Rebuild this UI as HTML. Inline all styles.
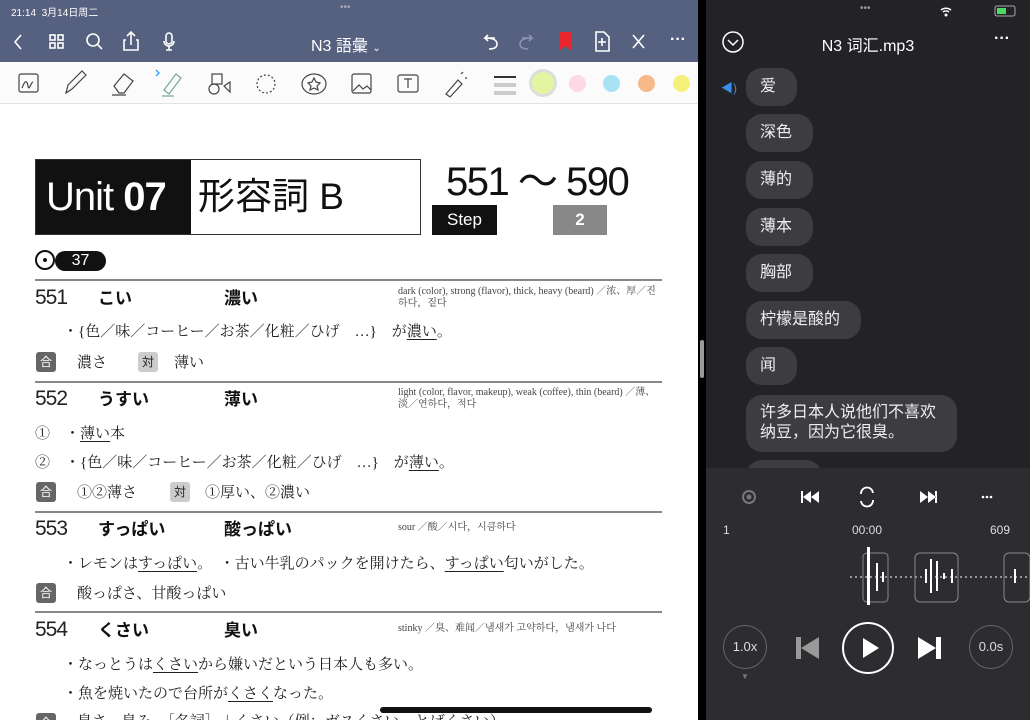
<!DOCTYPE html><html><head><meta charset="utf-8"><style>
*{margin:0;padding:0;box-sizing:border-box}
body{width:1030px;height:720px;overflow:hidden;background:#000;font-family:"Liberation Sans","Noto Sans CJK JP",sans-serif;position:relative}
.a{position:absolute}
#L{left:0;top:0;width:698px;height:720px;background:#fff;overflow:hidden}
#hdr{left:0;top:0;width:698px;height:62px;background:#56607f;color:#fff}
#tb{left:0;top:62px;width:698px;height:42px;background:#fbfbfb;border-bottom:1px solid #e2e2e2}
.jp{font-family:"Liberation Serif","Noto Serif CJK SC","Noto Sans CJK JP",serif;color:#222}
.hr{left:35px;width:627px;height:2px;background:#888}
.num{font-family:"Liberation Sans",sans-serif;font-size:21px;color:#222;letter-spacing:-1px}
.kw{font-family:"Noto Sans CJK JP",sans-serif;font-weight:bold;font-size:17px;color:#111}
.tr{font-family:"Liberation Serif","Noto Serif CJK SC",serif;font-size:10px;color:#444;line-height:12px}
.s{font-size:15px}
.bx{width:20px;height:20px;border-radius:3px;background:#666;color:#fff;font-size:12px;text-align:center;line-height:20px;font-family:"Noto Sans CJK JP",sans-serif}
.bx2{background:#ccc;color:#222}
u{text-decoration:underline;text-underline-offset:3px}
#R{left:706px;top:0;width:324px;height:720px;background:#232226;color:#fff;font-family:"Liberation Sans","Noto Sans CJK SC",sans-serif}
.bub{left:40px;background:#3d3c40;border-radius:16px;font-size:16px;padding:0 21px 0 14px;height:38px;line-height:38px;color:#eee}
#pl{left:0;top:468px;width:324px;height:252px;background:#2d2c30}
.c{border:1.5px solid #666;border-radius:50%;text-align:center;color:#ddd;font-size:13px}
</style></head><body>
<div id="L" class="a">
 <div id="hdr" class="a">
  <div class="a" style="left:11px;top:4px;font-size:10px">21:14 &nbsp;3月14日周二</div>
  <div class="a" style="left:340px;top:2px;font-size:10px;color:#aab">•••</div>
  <svg class="a" style="left:0;top:26px" width="698" height="32" fill="none" stroke="#fff" stroke-width="1.6">
   <path d="M21 9l-6 7 6 7"/>
   <rect x="50" y="9" width="5" height="5"/><rect x="58" y="9" width="5" height="5"/><rect x="50" y="17" width="5" height="5"/><rect x="58" y="17" width="5" height="5"/>
   <circle cx="93" cy="14" r="6"/><path d="M97 18l5 5"/>
   <path d="M126 14h-2v10h14v-10h-2M131 19v-13M127 10l4-4 4 4"/>
   <rect x="166" y="7" width="6" height="11" rx="3"/><path d="M164 15a5 5 0 0010 0M169 20v4M166 24h6"/>
   <path d="M495 12h-10l3-3M485 12l3 3M485 12c8 0 12 2 12 6s-4 5-8 5"/>
   <path stroke="#8b93ad" d="M522 12h10l-3-3M532 12l-3 3M532 12c-8 0-12 2-12 6s4 5 8 5"/>
   <path fill="#e8262e" stroke="none" d="M559 6h13v19l-6.5-5-6.5 5z"/>
   <path d="M596 6h8l5 5v14h-13zM602 12v8M598 16h8"/>
   <path d="M633 9l11 13M644 9l-11 13"/>
  </svg>
  <div class="a" style="left:311px;top:32px;font-size:16px;font-family:'Liberation Sans','Noto Sans CJK JP',sans-serif">N3 語彙 <span style="font-size:10px">⌄</span></div>
  <div class="a" style="left:670px;top:31px;font-size:16px;font-weight:bold">···</div>
 </div>
 <div id="tb" class="a">
  <svg class="a" style="left:0;top:0" width="698" height="42" fill="none" stroke="#444" stroke-width="1.2">
   <rect x="19" y="12" width="19" height="18" rx="2"/><path d="M22 26c3-8 5-8 6-2s3-4 5-4"/>
   <path d="M66 31l2-8 14-14 4 4-14 14z"/>
   <path d="M114 24l10-12 9 7-9 12h-5zM112 33h14"/>
   <path stroke="#7a9" d="M164 28l12-16 5 4-12 16zM162 34h12"/><path stroke="#1a8fff" d="M156 8l3 3-3 3"/>
   <circle cx="214" cy="27" r="5"/><rect x="212" y="12" width="10" height="10"/><path d="M224 24l6-4v10z"/>
   <circle cx="266" cy="22" r="9" stroke-dasharray="2 2"/>
   <ellipse cx="314" cy="22" rx="12" ry="10"/><path d="M314 16l2 4 4 1-3 3 1 4-4-2-4 2 1-4-3-3 4-1z"/>
   <rect x="352" y="12" width="19" height="19" rx="2"/><path d="M353 29l6-6 4 4 4-3 4 4"/>
   <rect x="398" y="13" width="20" height="17" rx="2"/><path d="M404 17h8M408 17v9"/>
   <path d="M446 32l12-14 4 4-12 13zM461 12l2-2M465 16l2 0"/>
   <path stroke="#333" stroke-width="2" d="M494 15h22"/><path stroke="#ccc" stroke-width="4" d="M494 23h22M494 31h22"/>
  </svg>
  <div class="a" style="left:532px;top:10px;width:22px;height:22px;border-radius:50%;background:#e3f5a0;box-shadow:0 0 0 3px #ddd"></div>
  <div class="a" style="left:569px;top:13px;width:17px;height:17px;border-radius:50%;background:#fcd9e4"></div>
  <div class="a" style="left:603px;top:13px;width:17px;height:17px;border-radius:50%;background:#a7e3f5"></div>
  <div class="a" style="left:638px;top:13px;width:17px;height:17px;border-radius:50%;background:#f7b98a"></div>
  <div class="a" style="left:673px;top:13px;width:17px;height:17px;border-radius:50%;background:#f5f07a"></div>
 </div>
 <div class="a" style="left:35px;top:159px;width:156px;height:75px;background:#111"></div>
 <div class="a" style="left:35px;top:159px;width:386px;height:76px;border:1.5px solid #333"></div>
 <div class="a" style="left:46px;top:172px;color:#fff;font-size:40px;line-height:50px;letter-spacing:-1px">Unit <b>07</b></div>
 <div class="a" style="left:198px;top:172px;color:#111;font-size:37px;line-height:50px;font-family:'Liberation Sans','Noto Sans CJK JP',sans-serif">形容詞 B</div>
 <div class="a" style="left:446px;top:158px;color:#111;font-size:40px;line-height:48px;letter-spacing:-1.5px">551 〜 590</div>
 <div class="a" style="left:432px;top:205px;width:65px;height:30px;background:#111;color:#fff;font-size:17px;text-align:center;line-height:30px">Step</div>
 <div class="a" style="left:553px;top:205px;width:54px;height:30px;background:#888;color:#fff;font-size:17px;font-weight:bold;text-align:center;line-height:30px">2</div>
 <div class="a" style="left:35px;top:250px;width:20px;height:20px;border:2px solid #111;border-radius:50%"></div>
 <div class="a" style="left:43px;top:258px;width:4px;height:4px;border-radius:50%;background:#111"></div>
 <div class="a" style="left:55px;top:251px;width:51px;height:20px;background:#111;border-radius:10px;color:#fff;font-size:16px;text-align:center;line-height:20px">37</div>
 <div class="a hr" style="top:279px"></div>
 <div class="a num" style="left:35px;top:286px">551</div><div class="a kw" style="left:98px;top:284px">こい</div><div class="a kw" style="left:224px;top:284px">濃い</div>
 <div class="a tr" style="left:398px;top:286px;width:265px">dark (color), strong (flavor), thick, heavy (beard) ／浓、厚／진하다，짙다</div>
 <div class="a jp s" style="left:63px;top:320px">・{色／味／コーヒー／お茶／化粧／ひげ　…}　が<u>濃い</u>。</div>
 <div class="a bx" style="left:36px;top:352px">合</div><div class="a jp s" style="left:77px;top:351px">濃さ</div>
 <div class="a bx bx2" style="left:138px;top:352px">対</div><div class="a jp s" style="left:174px;top:351px">薄い</div>
 <div class="a hr" style="top:381px"></div>
 <div class="a num" style="left:35px;top:387px">552</div><div class="a kw" style="left:98px;top:385px">うすい</div><div class="a kw" style="left:224px;top:385px">薄い</div>
 <div class="a tr" style="left:398px;top:387px;width:265px">light (color, flavor, makeup), weak (coffee), thin (beard) ／薄、淡／연하다，적다</div>
 <div class="a jp s" style="left:35px;top:422px">①　・<u>薄い</u>本</div>
 <div class="a jp s" style="left:35px;top:451px">②　・{色／味／コーヒー／お茶／化粧／ひげ　…}　が<u>薄い</u>。</div>
 <div class="a bx" style="left:36px;top:482px">合</div><div class="a jp s" style="left:77px;top:481px">①②薄さ</div>
 <div class="a bx bx2" style="left:170px;top:482px">対</div><div class="a jp s" style="left:205px;top:481px">①厚い、②濃い</div>
 <div class="a hr" style="top:511px"></div>
 <div class="a num" style="left:35px;top:517px">553</div><div class="a kw" style="left:98px;top:515px">すっぱい</div><div class="a kw" style="left:224px;top:515px">酸っぱい</div>
 <div class="a tr" style="left:398px;top:522px">sour ／酸／시다，시큼하다</div>
 <div class="a jp s" style="left:63px;top:552px">・レモンは<u>すっぱい</u>。　・古い牛乳のパックを開けたら、<u>すっぱい</u>匂いがした。</div>
 <div class="a bx" style="left:36px;top:583px">合</div><div class="a jp s" style="left:77px;top:582px">酸っぱさ、甘酸っぱい</div>
 <div class="a hr" style="top:611px"></div>
 <div class="a num" style="left:35px;top:618px">554</div><div class="a kw" style="left:98px;top:616px">くさい</div><div class="a kw" style="left:224px;top:616px">臭い</div>
 <div class="a tr" style="left:398px;top:623px">stinky ／臭、难闻／냄새가 고약하다，냄새가 나다</div>
 <div class="a jp s" style="left:63px;top:653px">・なっとうは<u>くさい</u>から嫌いだという日本人も多い。</div>
 <div class="a jp s" style="left:63px;top:682px">・魚を焼いたので台所が<u>くさく</u>なった。</div>
 <div class="a bx" style="left:36px;top:713px">合</div><div class="a jp s" style="left:77px;top:710px">臭さ、臭み、［名詞］＋くさい（例：ガスくさい、とげくさい）</div>
 <div class="a" style="left:380px;top:707px;width:272px;height:6px;border-radius:3px;background:#111"></div>
</div>
<div class="a" style="left:700px;top:340px;width:4px;height:38px;border-radius:2px;background:#999"></div>
<div id="R" class="a">
 <div class="a" style="left:154px;top:3px;font-size:10px;color:#999">•••</div>
 <svg class="a" style="left:225px;top:4px" width="90" height="14"><path d="M10 6a8 8 0 0110 0M12 8a5 5 0 016 0" stroke="#fff" stroke-width="1.5" fill="none"/><circle cx="15" cy="11" r="1.5" fill="#fff"/><rect x="64" y="2" width="20" height="10" rx="2" stroke="#aaa" fill="none"/><rect x="66" y="4" width="9" height="6" fill="#4cd964"/></svg>
 <svg class="a" style="left:16px;top:31px" width="22" height="22"><circle cx="11" cy="11" r="10" stroke="#fff" stroke-width="1.5" fill="none"/><path d="M6 9l5 5 5-5" stroke="#fff" stroke-width="1.5" fill="none"/></svg>
 <div class="a" style="left:0;width:324px;top:32px;text-align:center;font-size:16px">N3 词汇.mp3</div>
 <div class="a" style="left:288px;top:30px;font-size:16px;font-weight:bold">···</div>
 <div class="a" style="left:15px;top:79px;color:#3a8eea;font-size:12px">◀︎)</div>
 <div class="a bub" style="top:68px">爱</div>
 <div class="a bub" style="top:114px">深色</div>
 <div class="a bub" style="top:161px">薄的</div>
 <div class="a bub" style="top:208px">薄本</div>
 <div class="a bub" style="top:254px">胸部</div>
 <div class="a bub" style="top:301px">柠檬是酸的</div>
 <div class="a bub" style="top:347px">闻</div>
 <div class="a bub" style="top:395px;height:57px;line-height:20px;padding-top:8px">许多日本人说他们不喜欢<br>纳豆，因为它很臭。</div>
 <div class="a bub" style="top:460px;width:76px"></div>
 <div id="pl" class="a">
  <svg class="a" style="left:0;top:15px" width="324" height="130" fill="#fff">
   <circle cx="43" cy="14" r="6" stroke="#777" stroke-width="2" fill="none"/><circle cx="43" cy="14" r="2.5" fill="#777"/>
   <path d="M95 8h2v12h-2zM105 8v12l-8-6zM113 8v12l-8-6z"/>
   <path d="M155 11a6 6 0 0112-1M167 17a6 6 0 01-12 1" stroke="#fff" stroke-width="1.8" fill="none"/>
   <path d="M214 8v12l8-6zM222 8v12l8-6zM229 8h2v12h-2z"/>
   <circle cx="277" cy="14" r="1.3"/><circle cx="281" cy="14" r="1.3"/><circle cx="285" cy="14" r="1.3"/>
   <path d="M144 94h180" stroke="#fff" stroke-dasharray="2 3"/>
   <rect x="157" y="70" width="25" height="49" rx="4" stroke="#888" fill="none"/>
   <rect x="209" y="70" width="43" height="49" rx="5" stroke="#888" fill="none"/>
   <rect x="298" y="70" width="26" height="49" rx="5" stroke="#888" fill="none"/>
   <rect x="161" y="64" width="3" height="58"/><rect x="170" y="80" width="2" height="28"/><rect x="176" y="89" width="2" height="10"/>
   <rect x="219" y="86" width="2" height="14"/><rect x="224" y="76" width="2" height="34"/><rect x="230" y="78" width="2" height="30"/><rect x="237" y="90" width="2" height="6"/><rect x="245" y="86" width="2" height="14"/><rect x="308" y="86" width="2" height="14"/>
  </svg>
  <div class="a" style="left:17px;top:55px;font-size:12px;color:#ddd">1</div>
  <div class="a" style="left:146px;top:55px;font-size:12px;color:#ddd">00:00</div>
  <div class="a" style="left:284px;top:55px;font-size:12px;color:#ddd">609</div>
  <div class="a c" style="left:17px;top:157px;width:44px;height:44px;line-height:42px">1.0x</div>
  <div class="a" style="left:35px;top:204px;font-size:8px;color:#777">▼</div>
  <svg class="a" style="left:85px;top:163px" width="160" height="34"><path d="M5 6h5v22h-5zM28 6v22l-18-11z" fill="#999"/><path d="M127 6v22l18-11zM145 6h5v22h-5z" fill="#fff"/></svg>
  <div class="a" style="left:136px;top:154px;width:52px;height:52px;border:2px solid #fff;border-radius:50%"></div>
  <svg class="a" style="left:155px;top:168px" width="20" height="24"><path d="M2 2v20l16-10z" fill="#fff"/></svg>
  <div class="a c" style="left:263px;top:157px;width:44px;height:44px;line-height:42px">0.0s</div>
 </div>
</div>
</body></html>
